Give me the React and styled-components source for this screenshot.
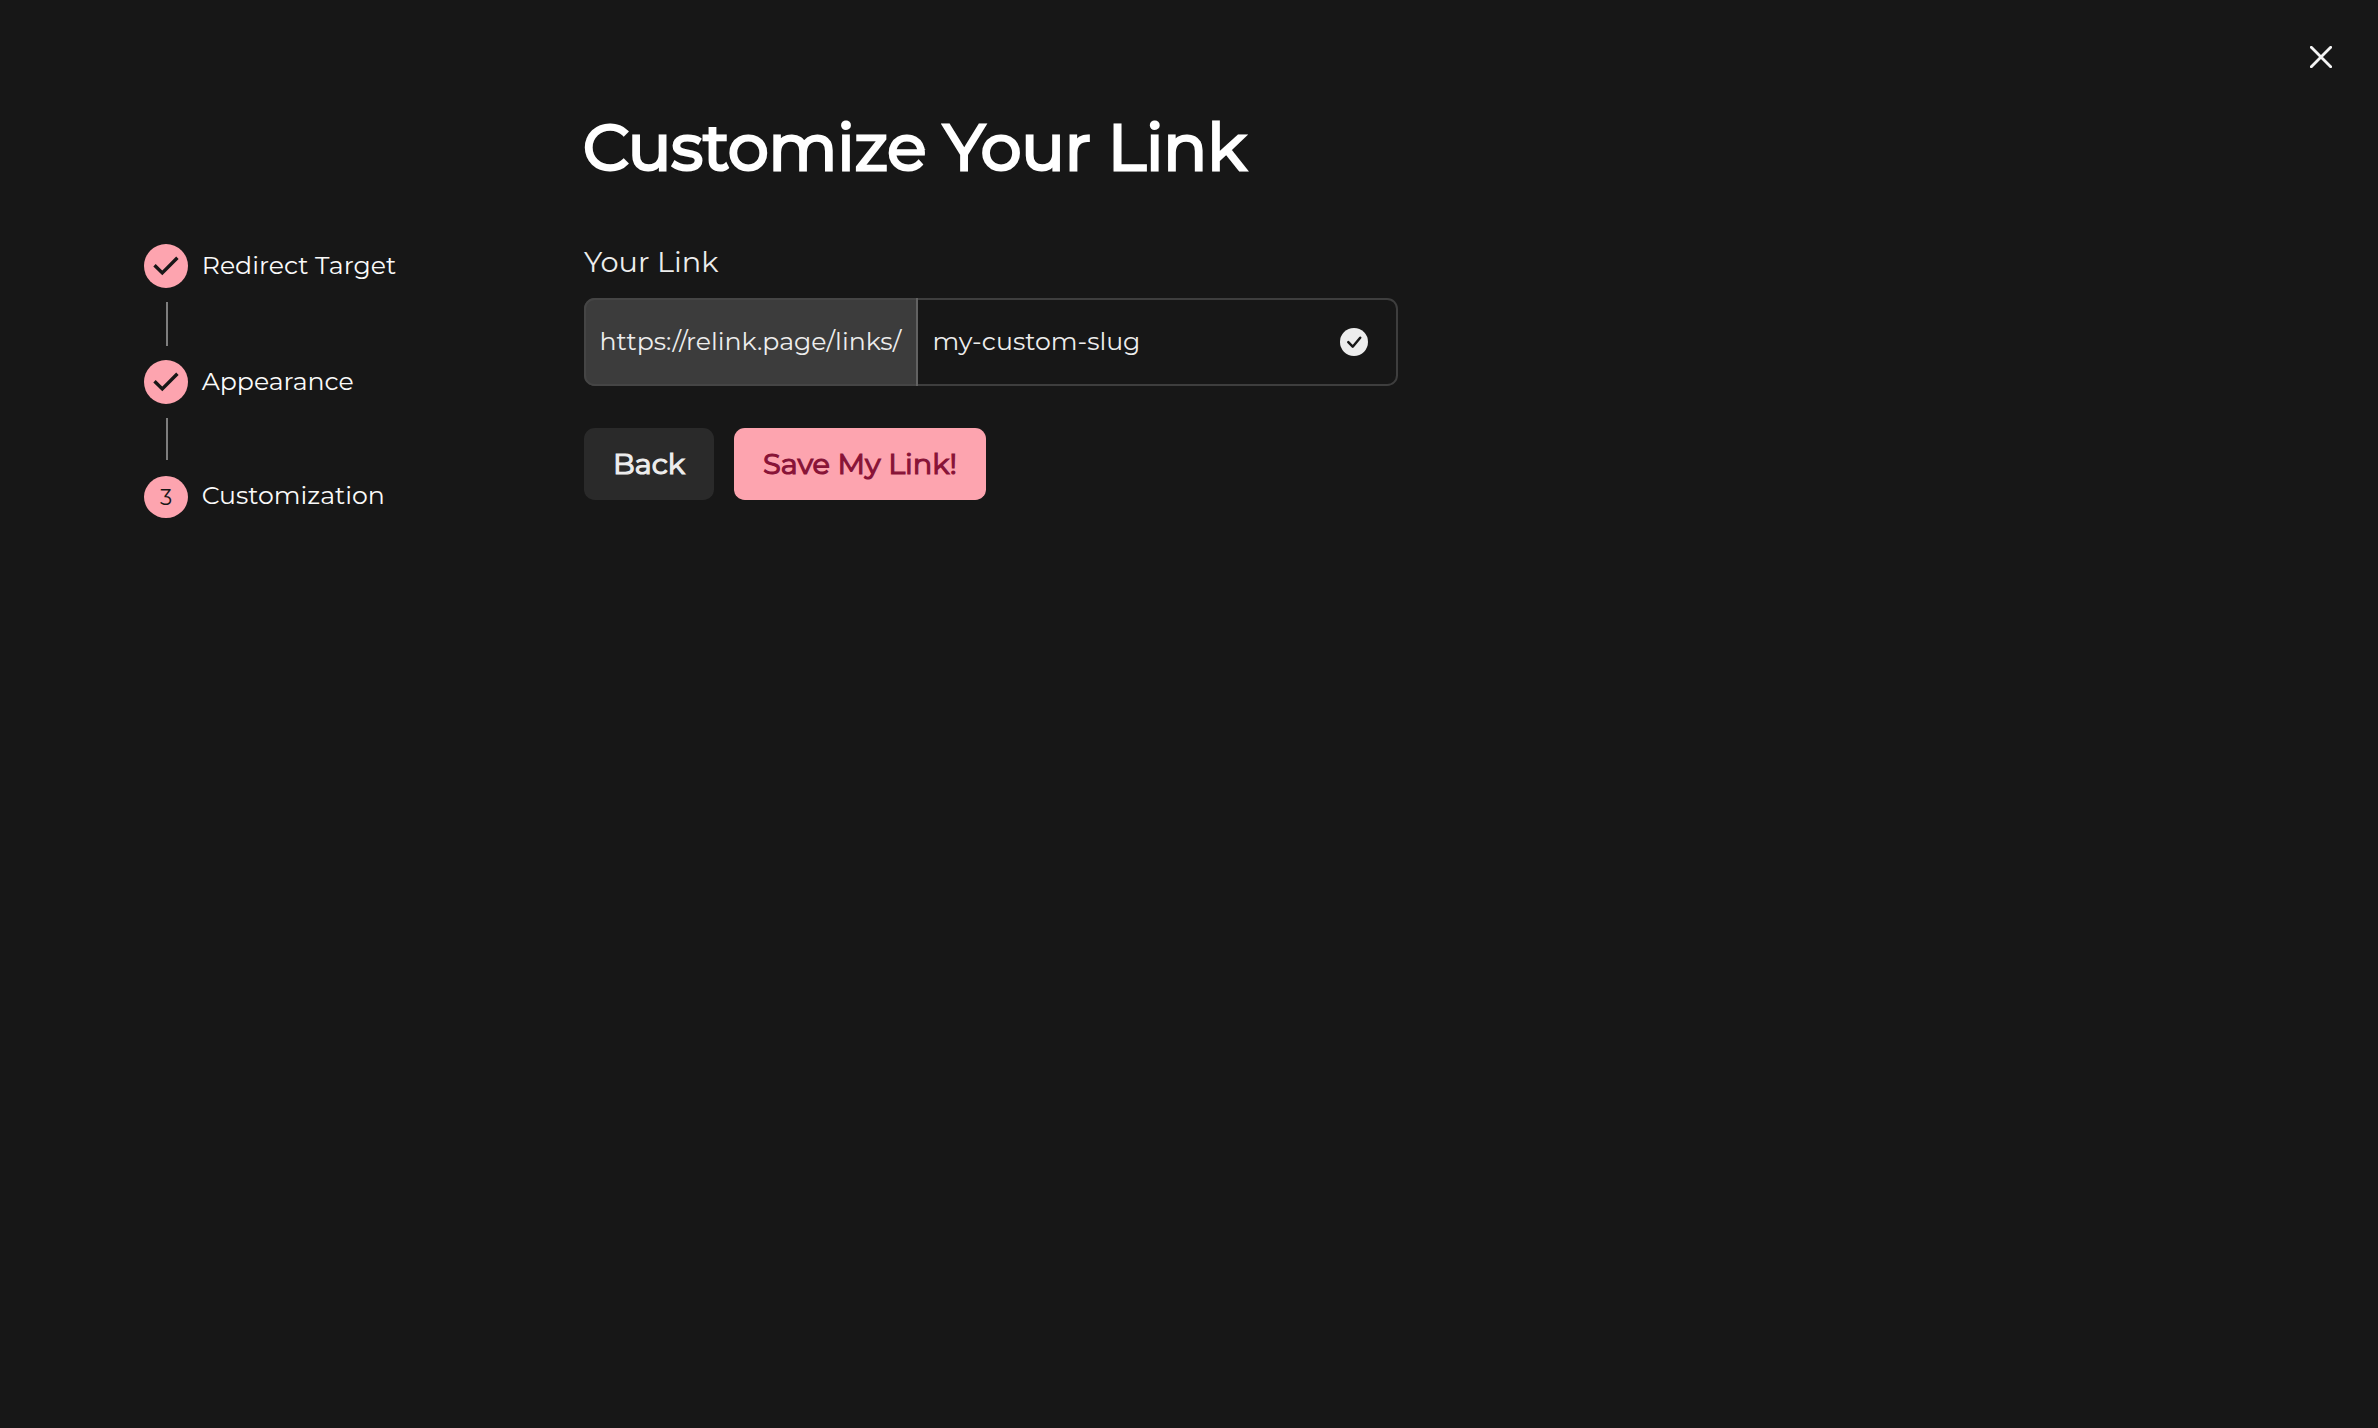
import styled, { createGlobalStyle } from "styled-components";

const GlobalStyle = createGlobalStyle`
  :root {
    --color-bg: #171717;
    --color-text: #ededed;
    --color-line: #7e7e7e;
    --color-border: #3e3e3e;
    --color-pink: #fda4af;
    --color-wine: #881337;
  }

  * {
    box-sizing: border-box;
  }

  html {
    font-size: 28.8px;
  }

  body {
    margin: 0;
    background: var(--color-bg);
    color: var(--color-text);
    font-family: Montserrat, Inter, sans-serif;
  }

  button,
  input {
    font-family: inherit;
  }
`;

const Page = styled.div`
  display: grid;
  grid-template-columns: 440px 814px 1fr;
  height: 1428px;
  padding-left: 144px;
`;

const Steps = styled.ol`
  display: flex;
  flex-direction: column;
  margin: 0;
  padding: 244px 0 0;
  list-style: none;
`;

const Step = styled.li`
  display: flex;
  align-items: center;
  gap: 0.475rem;
  height: ${({ $height }) => $height}px;
`;

const StepMark = styled.span`
  display: flex;
  align-items: center;
  justify-content: center;
  width: 44px;
  height: 100%;
  border-radius: 50%;
  background: var(--color-pink);
  color: var(--color-bg);
  font-size: 0.75rem;
`;

const StepLabel = styled.span`
  padding-bottom: ${({ $lift = 2 }) => $lift}px;
  color: #fafafa;
  font-size: 0.875rem;
  line-height: 36px;
  white-space: nowrap;
`;

const Connector = styled.li`
  width: 2px;
  height: ${({ $height }) => $height}px;
  margin: 14px 0 ${({ $after }) => $after}px 22px;
  background: var(--color-line);
`;

const Content = styled.main`
  display: flex;
  flex-direction: column;
  padding-top: 107px;
`;

const Title = styled.h1`
  margin: 0 0 0 -1px;
  color: #fff;
  font-size: 2.25rem;
  font-weight: 400;
  line-height: 80px;
  white-space: nowrap;
  -webkit-text-stroke: 3.1px currentColor;
`;

const Label = styled.label`
  margin-top: 55px;
  font-size: 1rem;
  line-height: 40px;
`;

const Field = styled.div`
  display: flex;
  height: 88px;
  margin-top: 16px;
  border: 2px solid var(--color-border);
  border-radius: 0.375rem;
`;

const Prefix = styled.span`
  display: flex;
  align-items: center;
  width: 332px;
  margin: -2px 0 -2px -2px;
  padding: 0 0 2px 13.5px;
  border: 2px solid #454545;
  border-right: 0;
  border-radius: 0.375rem 0 0 0.375rem;
  background: #3c3c3c;
  font-size: 0.875rem;
  white-space: nowrap;
`;

const Divider = styled.span`
  width: 2px;
  margin: -2px 0;
  background: #626262;
`;

const Slug = styled.input`
  flex: 1;
  min-width: 0;
  padding: 0 0 2px 14.4px;
  border: 0;
  outline: 0;
  background: transparent;
  color: var(--color-text);
  font-size: 0.875rem;
`;

const Status = styled.span`
  display: flex;
  align-items: center;
  padding-right: 28px;
`;

const Actions = styled.div`
  display: flex;
  gap: 20px;
  margin-top: 42px;
`;

const Button = styled.button`
  width: ${({ $primary }) => ($primary ? 252 : 130)}px;
  height: 72px;
  padding: 0 0 1px;
  border: 0;
  border-radius: 0.375rem;
  background: ${({ $primary }) =>
    $primary ? "var(--color-pink)" : "#2a2a2a"};
  color: ${({ $primary }) =>
    $primary ? "var(--color-wine)" : "var(--color-text)"};
  font-size: 1rem;
  white-space: nowrap;
  -webkit-text-stroke: 1.2px currentColor;
`;

const Close = styled.button`
  justify-self: end;
  align-self: start;
  display: flex;
  margin: 46px 46px 0 0;
  padding: 0;
  border: 0;
  background: transparent;
  color: #f4f4f4;
`;

function CheckIcon() {
  return (
    <svg width="44" height="44" viewBox="0 0 44 44" fill="none">
      <path d="M10.5 21.3 18.3 28.9 33.4 13.8" stroke="currentColor" strokeWidth="3.4" />
    </svg>
  );
}

function CheckBadge() {
  return (
    <svg width="28" height="28" viewBox="0 0 28 28" fill="none">
      <circle cx="14" cy="14" r="14" fill="#ededed" />
      <path
        d="M8.3 14.2 12.7 18.7 20.2 9.8"
        stroke="#171717"
        strokeWidth="2.5"
        strokeLinecap="round"
        strokeLinejoin="round"
      />
    </svg>
  );
}

function CloseIcon() {
  return (
    <svg width="22" height="22" viewBox="0 0 22 22">
      <path
        d="M1.3 1.3 20.7 20.7M20.7 1.3 1.3 20.7"
        stroke="currentColor"
        strokeWidth="2.8"
        strokeLinecap="round"
      />
    </svg>
  );
}

function App() {
  return (
    <>
      <GlobalStyle />
      <Page>
        <Steps>
          <Step $height={44}>
            <StepMark>
              <CheckIcon />
            </StepMark>
            <StepLabel>Redirect Target</StepLabel>
          </Step>
          <Connector $height={44} $after={14} />
          <Step $height={44}>
            <StepMark>
              <CheckIcon />
            </StepMark>
            <StepLabel>Appearance</StepLabel>
          </Step>
          <Connector $height={42} $after={16} />
          <Step $height={42}>
            <StepMark>3</StepMark>
            <StepLabel $lift={4}>Customization</StepLabel>
          </Step>
        </Steps>
        <Content>
          <Title>Customize Your Link</Title>
          <Label htmlFor="slug">Your Link</Label>
          <Field>
            <Prefix>https://relink.page/links/</Prefix>
            <Divider />
            <Slug id="slug" defaultValue="my-custom-slug" />
            <Status>
              <CheckBadge />
            </Status>
          </Field>
          <Actions>
            <Button>Back</Button>
            <Button $primary>Save My Link!</Button>
          </Actions>
        </Content>
        <Close aria-label="Close">
          <CloseIcon />
        </Close>
      </Page>
    </>
  );
}

export default App;
